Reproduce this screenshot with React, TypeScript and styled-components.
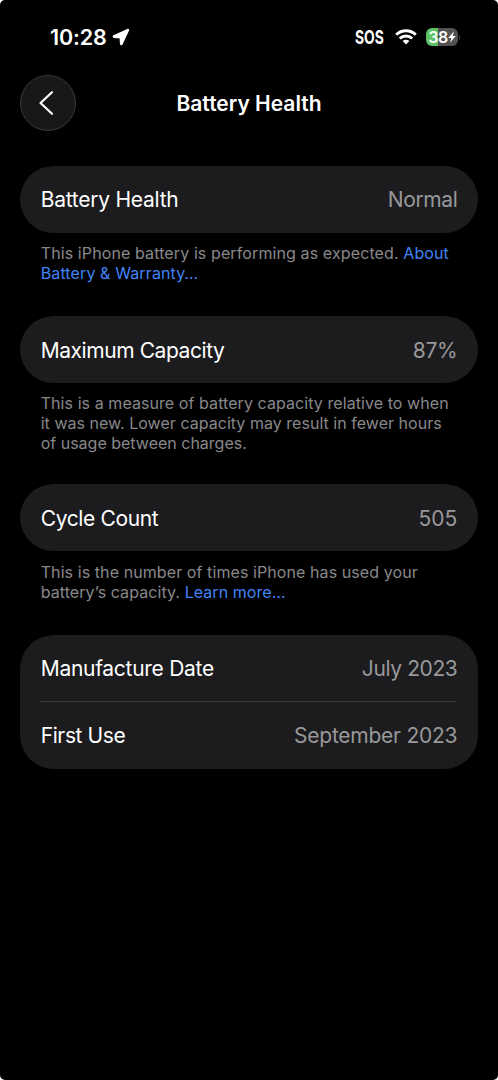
import React from "react";
import styled, { createGlobalStyle } from "styled-components";

const Global = createGlobalStyle`
  * { box-sizing: border-box; }
  body { margin: 0; background: #fff; font-family: Inter, "Liberation Sans", sans-serif; }
`;

const Screen = styled.div`
  width: 498px;
  height: 1080px;
  background: #000;
  color: #fff;
  overflow: hidden;
  border-radius: 5px;
`;

const StatusBar = styled.div`
  height: 75px;
  display: flex;
  justify-content: space-between;
  align-items: center;
  padding: 0 38px 1px 50px;
`;

const Cluster = styled.div`
  display: flex;
  align-items: center;
`;

const Clock = styled.span`
  width: 61.5px;
  font-size: 21.5px;
  font-weight: 600;
  letter-spacing: -0.1px;
  white-space: nowrap;
`;

const Carrier = styled.span`
  width: 29px;
  margin-right: 11px;
  font-size: 19px;
  font-weight: 700;
  transform: scaleX(0.73);
  transform-origin: left center;
`;

const Battery = styled.div`
  width: 32px;
  height: 18px;
  margin-left: 9px;
  border-radius: 6px;
  display: flex;
  align-items: center;
  justify-content: center;
  background: linear-gradient(90deg, #5cc163 0 39%, #525254 39%);
  font-size: 16px;
  font-weight: 600;
  letter-spacing: -0.5px;
`;

const BatteryTip = styled.i`
  width: 1px;
  height: 5px;
  margin-left: 1px;
  border-radius: 0 1px 1px 0;
  background: #414143;
`;

const Header = styled.header`
  height: 56px;
  margin-bottom: 35px;
  display: grid;
  grid-template-columns: 56px 1fr 56px;
  align-items: center;
  justify-items: center;
  padding: 0 20px;
`;

const Title = styled.h1`
  margin: 0;
  font-size: 21px;
  font-weight: 600;
  white-space: nowrap;
`;

const BackButton = styled.button`
  width: 56px;
  height: 56px;
  padding: 0 4px 0 0;
  border-radius: 50%;
  border: 1px solid #3a3a3a;
  background: #181818;
  display: flex;
  align-items: center;
  justify-content: center;
`;

const Card = styled.section`
  margin: 0 20px;
  padding: 0 21px 0 20px;
  border-radius: 34px;
  background: #1c1c1e;
`;

const Row = styled.div<{ $height: number; $drop: number; $divided?: boolean }>`
  height: ${(p) => p.$height}px;
  padding: ${(p) => p.$drop}px 0 0 0.7px;
  display: flex;
  align-items: center;
  justify-content: space-between;
  border-top: ${(p) => (p.$divided ? "1px solid #39393b" : "none")};
`;

const Label = styled.span<{ $ls: number }>`
  font-size: 21px;
  white-space: nowrap;
  letter-spacing: ${(p) => p.$ls}px;
`;

const Value = styled(Label)`
  margin-right: ${(p) => p.$ls}px;
  color: #98989b;
`;

const Note = styled.p<{ $height: number; $top?: number }>`
  margin: 0;
  height: ${(p) => p.$height}px;
  padding: ${(p) => p.$top ?? 10}px 0 0 40.7px;
  font-size: 16px;
  line-height: 20px;
  color: #88888b;
`;

const Line = styled.span<{ $ls: number }>`
  display: block;
  white-space: nowrap;
  letter-spacing: ${(p) => p.$ls}px;
`;

const Link = styled.a`
  color: #4084f6;
`;

interface EntryProps {
  label: string;
  value: string;
  height?: number;
  drop?: number;
  divided?: boolean;
  ls: number;
  vls: number;
}

function Entry({ label, value, height = 67, drop = 0, divided, ls, vls }: EntryProps) {
  return (
    <Row $height={height} $drop={drop} $divided={divided}>
      <Label $ls={ls}>{label}</Label>
      <Value $ls={vls}>{value}</Value>
    </Row>
  );
}

export default function App() {
  return (
    <Screen>
      <Global />
      <StatusBar>
        <Cluster>
          <Clock>10:28</Clock>
          <svg width="18" height="18" viewBox="0 0 18 18">
            <path d="M15.600 1.600 1.700 7.900Q.9 8.700 2 9.200L8.300 9.700 8.700 15.900Q9.200 17.100 10 16L16.400 2.300Q16.500 1.400 15.600 1.600Z" fill="#fff" stroke="#fff" strokeWidth="1.500" strokeLinejoin="round" />
          </svg>
        </Cluster>
        <Cluster>
          <Carrier>SOS</Carrier>
          <svg width="22" height="16" viewBox="0 0 22 16" fill="none" stroke="#fff" strokeWidth="2.900">
            <path d="M1.200 5.800A14 14 0 0 1 20.800 5.800M4.800 9.500A8.800 8.800 0 0 1 17.200 9.500" />
            <path d="M7.600 12.100A4.900 4.900 0 0 1 14.400 12.100L11 15.600Z" fill="#fff" stroke="none" />
          </svg>
          <Battery>
            38
            <svg width="8" height="12" viewBox="0 0 8 12">
              <path d="M5.900.3.300 6.900H3.300L2.100 11.700 7.700 5.100H4.700Z" fill="#fff" />
            </svg>
          </Battery>
          <BatteryTip />
        </Cluster>
      </StatusBar>
      <Header>
        <BackButton aria-label="Back">
          <svg width="16" height="26" viewBox="0 0 16 26">
            <path d="M14 2.300 2.500 13 14 23.700" fill="none" stroke="#fff" strokeWidth="2.200" strokeLinecap="round" strokeLinejoin="round" />
          </svg>
        </BackButton>
        <Title>Battery Health</Title>
      </Header>
      <Card><Entry label="Battery Health" value="Normal" ls={-0.25} vls={-0.4} /></Card>
      <Note $height={83}>
        <Line $ls={0.11}>This iPhone battery is performing as expected. <Link>About</Link></Line>
        <Line $ls={0.12}><Link>Battery &amp; Warranty…</Link></Line>
      </Note>
      <Card><Entry label="Maximum Capacity" value="87%" drop={2} ls={-0.43} vls={-0.3} /></Card>
      <Note $height={101.4}>
        <Line $ls={0.07}>This is a measure of battery capacity relative to when</Line>
        <Line $ls={0.03}>it was new. Lower capacity may result in fewer hours</Line>
        <Line $ls={0}>of usage between charges.</Line>
      </Note>
      <Card><Entry label="Cycle Count" value="505" drop={1} ls={-0.36} vls={-0.1} /></Card>
      <Note $height={83.6} $top={10.6}>
        <Line $ls={0.085}>This is the number of times iPhone has used your</Line>
        <Line $ls={0.07}>battery’s capacity. <Link>Learn more…</Link></Line>
      </Note>
      <Card>
        <Entry label="Manufacture Date" value="July 2023" height={66.4} ls={-0.28} vls={-0.4} />
        <Entry label="First Use" value="September 2023" height={67.3} divided ls={-0.4} vls={-0.25} />
      </Card>
    </Screen>
  );
}
